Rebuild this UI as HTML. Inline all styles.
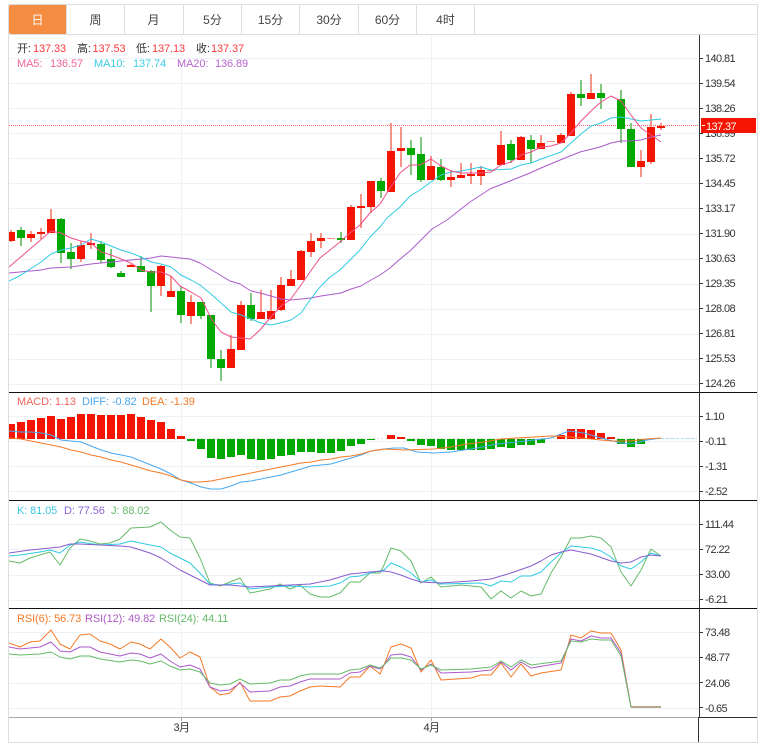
<!DOCTYPE html>
<html lang="zh"><head><meta charset="utf-8"><title>K线图</title>
<style>
html,body{margin:0;padding:0;background:#fff;width:767px;height:752px;overflow:hidden}
svg{display:block;position:absolute;left:0;top:0}
text{font-family:"Liberation Sans","Noto Sans CJK SC",sans-serif;font-size:11px}
.t{fill:#444;font-size:12px;text-anchor:middle}
.a{fill:#333;letter-spacing:-.6px}
.l{fill:none;stroke-width:1;stroke-linejoin:round}
</style></head><body>
<svg width="767" height="752" viewBox="0 0 767 752" xmlns="http://www.w3.org/2000/svg">
<defs><clipPath id="c"><rect x="9" y="35" width="690" height="682"/></clipPath></defs>
<!-- grid -->
<path d="M9 58.5H699M9 83.5H699M9 108.5H699M9 133.5H699M9 158.5H699M9 183.5H699M9 208.5H699M9 234.5H699M9 259.5H699M9 284.5H699M9 309.5H699M9 334.5H699M9 359.5H699M9 384.5H699M9 416.5H699M9 441.5H699M9 466.5H699M9 491.5H699M9 524.5H699M9 549.5H699M9 575.5H699M9 600.5H699M9 632.5H699M9 657.5H699M9 683.5H699M9 708.5H699M181.5 35V717M431.5 35V717" stroke="#edf2f6" fill="none"/>
<!-- outer frame -->
<rect x="8.5" y="4.5" width="749" height="738" fill="none" stroke="#ddd"/>
<path d="M9 34.5H757M66.5 5V34M124.5 5V34M183.5 5V34M241.5 5V34M299.5 5V34M358.5 5V34M416.5 5V34M474.5 5V34" stroke="#ddd" fill="none"/>
<path d="M11 5H66V34H11Q9 34 9 32V7Q9 5 11 5Z" fill="#f48c42"/>
<text x="37.5" y="24" class="t" style="fill:#fff">日</text>
<text x="95.5" y="24" class="t">周</text>
<text x="153.5" y="24" class="t">月</text>
<text x="212.5" y="24" class="t">5分</text>
<text x="270.5" y="24" class="t">15分</text>
<text x="329" y="24" class="t">30分</text>
<text x="387.5" y="24" class="t">60分</text>
<text x="445.5" y="24" class="t">4时</text>

<g clip-path="url(#c)">
<path d="M9 125.5H699" stroke="#f66" stroke-dasharray="1 1" fill="none"/>
<!-- red wicks -->
<path fill="#f59488" d="M10 230h2v12h-2zM30 231h2v11h-2zM40 228h2v11h-2zM50 209h2v24h-2zM80 241h2v21h-2zM90 233h2v16h-2zM130 264h2v3h-2zM160 265h2v31h-2zM170 276h2v21h-2zM190 295h2v29h-2zM230 335h2v33h-2zM240 301h2v49h-2zM260 290h2v29h-2zM270 290h2v30h-2zM280 277h2v34h-2zM290 270h2v16h-2zM300 250h2v30h-2zM310 233h2v24h-2zM320 233h2v15h-2zM350 205h2v35h-2zM360 194h2v34h-2zM370 181h2v32h-2zM390 123h2v69h-2zM400 127h2v40h-2zM430 156h2v24h-2zM450 170h2v17h-2zM460 163h2v15h-2zM470 163h2v21h-2zM480 166h2v19h-2zM500 131h2v34h-2zM520 136h2v24h-2zM540 135h2v14h-2zM560 133h2v10h-2zM570 92h2v44h-2zM590 74h2v25h-2zM640 150h2v27h-2zM650 114h2v50h-2zM660 123h2v7h-2z"/>
<!-- green wicks -->
<path fill="#80c880" d="M20 227h2v19h-2zM60 218h2v45h-2zM70 243h2v26h-2zM100 241h2v22h-2zM110 249h2v19h-2zM120 271h2v6h-2zM140 256h2v16h-2zM150 270h2v42h-2zM180 286h2v37h-2zM200 302h2v17h-2zM210 315h2v53h-2zM220 350h2v31h-2zM250 293h2v28h-2zM340 232h2v11h-2zM380 178h2v20h-2zM410 140h2v35h-2zM420 137h2v45h-2zM440 159h2v22h-2zM510 140h2v23h-2zM530 135h2v28h-2zM580 80h2v26h-2zM600 84h2v25h-2zM620 90h2v53h-2zM630 123h2v44h-2z"/>
<!-- red bodies -->
<path fill="#f51400" d="M9 232h6v9h-6zM27 234h8v4h-8zM37 232h8v2h-8zM47 219h8v14h-8zM77 245h8v14h-8zM87 243h8v2h-8zM127 265h8v2h-8zM157 266h8v20h-8zM167 291h8v6h-8zM187 302h8v14h-8zM227 349h8v19h-8zM237 305h8v45h-8zM257 312h8v7h-8zM267 311h8v8h-8zM277 285h8v25h-8zM287 279h8v7h-8zM297 251h8v29h-8zM307 241h8v11h-8zM317 238h8v3h-8zM347 207h8v33h-8zM357 206h8v2h-8zM367 181h8v26h-8zM387 151h8v41h-8zM397 148h8v3h-8zM427 166h8v14h-8zM447 177h8v3h-8zM457 175h8v3h-8zM467 174h8v2h-8zM477 170h8v6h-8zM497 145h8v20h-8zM517 137h8v23h-8zM537 143h8v6h-8zM557 135h8v8h-8zM567 94h8v42h-8zM587 93h8v6h-8zM637 161h8v6h-8zM647 127h8v35h-8zM657 126h8v2h-8z"/>
<path fill="#f58a80" d="M327 238h8v1h-8zM487 170h8v1h-8zM547 141h8v1h-8z"/>
<!-- green bodies -->
<path fill="#00a800" d="M17 230h8v8h-8zM57 219h8v34h-8zM67 252h8v7h-8zM97 244h8v16h-8zM107 259h8v8h-8zM117 273h8v4h-8zM137 266h8v6h-8zM147 271h8v15h-8zM177 291h8v24h-8zM197 302h8v14h-8zM207 315h8v44h-8zM217 359h8v9h-8zM247 305h8v14h-8zM337 238h8v2h-8zM377 181h8v10h-8zM407 148h8v7h-8zM417 154h8v26h-8zM437 167h8v13h-8zM507 144h8v16h-8zM527 140h8v9h-8zM577 94h8v4h-8zM597 93h8v5h-8zM617 99h8v30h-8zM627 129h8v38h-8z"/>
<!-- MA20 -->
<polyline class="l" stroke="#ac5acb" points="9,273 41,270 51,268 71,267 91,264 111,262 131,260 151,258 161,256 171,257 180,258 190,259 200,263 210,269 220,275 230,281 240,284 251,291 260,293 271,296 281,299 291,300 301,299 311,298 321,296 341,293 351,289 361,286 371,280 380,275 390,268 399,260 411,250 421,240 432,229 447,220 470,202 490,189 500,185 510,181 530,173 541,168 560,160 580,152 600,147 611,143 621,141 631,141 641,140 651,137 661,135"/>
<!-- MA10 -->
<polyline class="l" stroke="#2fcbe2" points="9,281 21,275 41,262 51,254 61,250 71,248 81,245 91,239 101,242 111,246 121,250 131,253 141,257 151,262 161,264 171,267 181,275 191,280 200,285 211,294 221,303 231,312 241,315 251,319 261,323 271,325 280,323 291,320 301,313 310,300 320,287 330,277 340,270 350,260 360,250 370,237 380,227 387,218 400,207 410,196 420,190 431,182 441,175 451,172 461,171 471,169 481,167 491,170 511,169 521,165 531,163 541,159 561,152 571,143 581,134 591,126 601,123 611,118 621,117 631,119 641,121 651,120 661,119"/>
<!-- MA5 -->
<polyline class="l" stroke="#ef4f8b" points="9,267 51,231 61,233 71,238 81,241 91,243 101,252 111,255 121,259 131,263 141,270 151,272 161,272 171,276 180,286 191,292 201,298 212,320 221,332 231,337 250,339 260,330 270,318 281,306 290,300 301,285 310,272 320,258 330,250 340,242 350,233 360,225 370,213 380,204 390,188 400,173 410,165 420,165 431,159 441,166 451,171 461,173 471,173 481,173 491,172 501,165 511,162 521,155 531,152 541,147 551,146 561,143 571,133 581,121 591,111 601,102 611,96 621,101 631,115 641,128 651,135 661,142"/>

<!-- MACD zero line -->
<path d="M9 438.5H697" stroke="#d5e8d8" stroke-dasharray="2 2" fill="none"/>
<path d="M661 438.5H697" stroke="#a5e0f0" stroke-dasharray="3 2" fill="none"/>
<!-- MACD red -->
<path fill="#f51400" d="M9 424h6v15h-6zM17 422h8v17h-8zM27 420h8v19h-8zM37 418h8v21h-8zM47 416h8v23h-8zM57 419h8v20h-8zM67 417h8v22h-8zM77 414h8v25h-8zM87 414h8v25h-8zM97 415h8v24h-8zM107 415h8v24h-8zM117 415h8v24h-8zM127 414h8v25h-8zM137 417h8v22h-8zM147 420h8v19h-8zM157 422h8v17h-8zM167 429h8v10h-8zM177 436h8v3h-8zM387 435h8v4h-8zM397 437h8v2h-8zM557 435h8v4h-8zM567 429h8v10h-8zM577 429h8v10h-8zM587 430h8v9h-8zM597 433h8v6h-8zM607 437h8v2h-8z"/>
<!-- MACD green -->
<path fill="#00a800" d="M187 439h8v2h-8zM197 439h8v10h-8zM207 439h8v19h-8zM217 439h8v20h-8zM227 439h8v18h-8zM237 439h8v16h-8zM247 439h8v20h-8zM257 439h8v21h-8zM267 439h8v20h-8zM277 439h8v17h-8zM287 439h8v16h-8zM297 439h8v13h-8zM307 439h8v13h-8zM317 439h8v14h-8zM327 439h8v14h-8zM337 439h8v12h-8zM347 439h8v7h-8zM357 439h8v5h-8zM367 439h8v1h-8zM407 439h8v2h-8zM417 439h8v6h-8zM427 439h8v7h-8zM437 439h8v10h-8zM447 439h8v11h-8zM457 439h8v11h-8zM467 439h8v11h-8zM477 439h8v11h-8zM487 439h8v10h-8zM497 439h8v8h-8zM507 439h8v9h-8zM517 439h8v6h-8zM527 439h8v6h-8zM537 439h8v4h-8zM617 439h8v5h-8zM627 439h8v8h-8zM637 439h8v5h-8z"/>
<!-- DIFF -->
<polyline class="l" stroke="#4aa8f0" points="9,431 21,432 31,432 41,433 51,435 61,440 71,441 81,442 91,446 101,450 111,453 121,455 131,457 141,461 151,465 161,469 171,474 181,480 191,483 201,487 211,489 221,489 231,486 241,482 251,481 261,479 271,477 281,475 291,472 301,469 311,466 321,465 331,464 341,461 351,458 361,455 371,451 384,449 394,448 404,448 417,452 434,453 451,452 464,450 477,448 497,444 517,442 534,440 551,438 569,431 584,433 601,438 621,443 632,444 647,440 661,438"/>
<!-- DEA -->
<polyline class="l" stroke="#f57a26" points="9,438 21,439 31,441 41,443 51,445 61,447 71,450 81,452 91,455 101,457 111,460 121,462 131,465 141,468 151,471 161,473 171,476 181,480 191,482 201,482 211,481 221,479 231,477 241,475 251,473 261,471 271,469 281,467 291,465 301,463 311,462 321,460 331,459 341,457 351,456 361,454 371,451 384,449 404,450 434,449 451,447 467,444 484,442 501,439 517,438 534,437 551,436 571,437 591,439 611,441 631,441 647,439 661,438"/>

<!-- J -->
<polyline class="l" stroke="#66bb6a" points="9,561 20,563 30,558 50,552 60,565 70,548 80,539 90,541 100,544 110,543 120,539 131,528 150,527 161,522 170,530 180,537 190,538 200,558 210,583 220,586 240,578 250,593 270,589 280,584 290,589 300,585 310,594 320,597 330,597 340,593 350,582 360,582 370,573 380,573 384,565 391,548 401,551 411,561 421,583 431,577 441,587 461,585 481,587 491,599 501,591 511,598 521,591 531,596 541,594 551,573 561,557 571,538 581,538 591,536 601,538 611,547 621,572 631,586 641,570 651,549 661,556"/>
<!-- K -->
<polyline class="l" stroke="#2fcbe2" points="9,556 20,555 40,552 50,550 60,553 70,545 80,542 100,545 120,544 131,541 150,545 161,547 170,553 180,558 190,563 200,573 210,584 220,585 240,583 250,589 270,587 290,586 310,587 330,586 340,583 350,577 360,576 370,573 384,570 391,563 401,567 411,573 421,582 431,580 441,584 481,583 491,586 501,581 511,582 521,576 531,576 541,572 551,562 561,553 571,546 591,548 601,551 611,557 621,566 631,569 641,562 651,553 661,556"/>
<!-- D -->
<polyline class="l" stroke="#8a5ccf" points="9,553 30,550 50,548 60,547 70,544 80,544 100,545 120,546 131,547 150,553 161,558 180,570 190,575 210,585 230,585 250,587 270,586 290,585 310,584 330,580 350,574 370,572 384,571 391,572 401,575 411,579 421,582 441,583 471,581 491,579 501,576 511,573 531,566 541,561 551,555 561,552 571,550 591,554 611,561 621,563 631,562 641,557 651,555 661,556"/>

<!-- RSI6 -->
<polyline class="l" stroke="#f57a26" points="9,643 20,647 30,642 40,641 51,630 60,644 70,649 80,635 90,634 100,641 110,644 120,649 131,642 140,644 150,649 161,639 170,647 180,658 190,652 200,657 210,687 220,695 230,693 240,682 250,701 270,701 280,697 290,696 300,691 310,687 320,686 340,687 350,677 360,677 370,666 380,674 384,665 391,647 401,644 411,648 421,672 431,660 441,680 471,678 481,675 491,675 501,663 511,677 521,664 531,676 541,673 561,670 571,635 581,638 591,631 601,633 611,633 621,650 631,707 661,707"/>
<!-- RSI12 -->
<polyline class="l" stroke="#ac5acb" points="9,647 20,649 40,647 51,642 60,651 70,652 80,647 90,647 100,652 120,656 131,653 140,654 150,658 161,654 170,661 180,667 190,665 200,669 210,687 220,691 230,690 240,683 250,692 270,691 280,687 290,686 300,682 310,679 320,679 340,679 350,673 360,672 370,666 380,669 384,665 391,655 401,654 411,657 421,670 431,664 441,673 471,672 481,671 491,670 501,662 511,670 521,662 531,668 561,663 571,639 581,641 591,636 601,638 611,638 621,653 631,707 661,707"/>
<!-- RSI24 -->
<polyline class="l" stroke="#66bb6a" points="9,654 20,655 40,654 51,652 60,657 70,659 80,656 90,656 100,659 120,662 131,660 140,661 150,664 161,661 170,666 180,670 190,669 200,672 210,683 220,685 230,684 240,679 250,684 270,683 280,680 290,680 300,676 310,674 340,674 350,670 360,669 370,665 380,668 384,665 391,658 401,658 411,660 421,669 431,665 441,670 471,669 491,667 501,661 511,667 521,660 531,665 561,661 571,641 581,642 591,639 601,640 611,640 621,656 631,707"/>
<rect x="631" y="706" width="30" height="2" fill="#b5a88a"/>
</g>

<!-- separators and axes -->
<path d="M9 392.5H757M9 500.5H757M9 608.5H757" stroke="#111" fill="none"/>
<path d="M9 717.5H699" stroke="#aaa" fill="none"/>
<path d="M699 717.5H757" stroke="#333" fill="none"/>
<path d="M699.5 35V717M698.5 717V742" stroke="#333" fill="none"/>
<path d="M181.5 717V721M431.5 717V721" stroke="#aaa" fill="none"/>
<path d="M699 58.5h4M699 83.5h4M699 108.5h4M699 133.5h4M699 158.5h4M699 183.5h4M699 208.5h4M699 233.5h4M699 258.5h4M699 283.5h4M699 308.5h4M699 333.5h4M699 358.5h4M699 383.5h4M699 416.5h4M699 441.5h4M699 466.5h4M699 491.5h4M699 524.5h4M699 549.5h4M699 574.5h4M699 599.5h4M699 632.5h4M699 657.5h4M699 682.5h4M699 707.5h4" stroke="#333" fill="none"/>

<!-- y labels -->
<g class="a">
<text class="a" x="705" y="62">140.81</text>
<text class="a" x="705" y="87">139.54</text>
<text class="a" x="705" y="112">138.26</text>
<text class="a" x="705" y="137">136.99</text>
<text class="a" x="705" y="162">135.72</text>
<text class="a" x="705" y="187">134.45</text>
<text class="a" x="705" y="212">133.17</text>
<text class="a" x="705" y="237">131.90</text>
<text class="a" x="705" y="262">130.63</text>
<text class="a" x="705" y="287">129.35</text>
<text class="a" x="705" y="312">128.08</text>
<text class="a" x="705" y="337">126.81</text>
<text class="a" x="705" y="362">125.53</text>
<text class="a" x="705" y="387">124.26</text>
<text class="a" x="705" y="420">1.10</text>
<text class="a" x="705" y="445">-0.11</text>
<text class="a" x="705" y="470">-1.31</text>
<text class="a" x="705" y="495">-2.52</text>
<text class="a" x="705" y="528">111.44</text>
<text class="a" x="705" y="553">72.22</text>
<text class="a" x="705" y="578">33.00</text>
<text class="a" x="705" y="603">-6.21</text>
<text class="a" x="705" y="636">73.48</text>
<text class="a" x="705" y="661">48.77</text>
<text class="a" x="705" y="687">24.06</text>
<text class="a" x="705" y="712">-0.65</text>
</g>
<!-- last price flag -->
<rect x="701" y="118" width="55" height="15" fill="#f51400"/>
<rect x="702" y="125" width="3" height="1" fill="#fff"/>
<text x="706" y="130" style="fill:#fff;font-size:11px;letter-spacing:-.6px">137.37</text>

<!-- x labels -->
<text x="181.5" y="731" text-anchor="middle" fill="#333" style="letter-spacing:-.6px">3月</text>
<text x="431.5" y="731" text-anchor="middle" fill="#333" style="letter-spacing:-.6px">4月</text>

<!-- legends -->
<g style="letter-spacing:-.1px">
<text x="17" y="52" fill="#333">开:</text><text x="33" y="52" fill="#fb3a3a">137.33</text>
<text x="77" y="52" fill="#333">高:</text><text x="92.500" y="52" fill="#fb3a3a">137.53</text>
<text x="136" y="52" fill="#333">低:</text><text x="152" y="52" fill="#fb3a3a">137.13</text>
<text x="196" y="52" fill="#333">收:</text><text x="211" y="52" fill="#fb3a3a">137.37</text>
<text x="17" y="67" fill="#f0659a">MA5:</text><text x="50" y="67" fill="#f0659a">136.57</text>
<text x="94" y="67" fill="#3ccde4">MA10:</text><text x="133" y="67" fill="#3ccde4">137.74</text>
<text x="177" y="67" fill="#b765cf">MA20:</text><text x="215" y="67" fill="#b765cf">136.89</text>
<text x="17" y="405" fill="#f2665c">MACD: 1.13</text>
<text x="82" y="405" fill="#4aa8f0">DIFF: -0.82</text>
<text x="142" y="405" fill="#f57a26">DEA: -1.39</text>
<text x="17" y="514" fill="#3cc8e4">K: 81.05</text>
<text x="64" y="514" fill="#8a62cf">D: 77.56</text>
<text x="111" y="514" fill="#66bb6a">J: 88.02</text>
<text x="17" y="622" fill="#f57a26">RSI(6): 56.73</text>
<text x="85" y="622" fill="#b05cc8">RSI(12): 49.82</text>
<text x="159" y="622" fill="#66bb6a">RSI(24): 44.11</text>
</g>
</svg>
</body></html>
